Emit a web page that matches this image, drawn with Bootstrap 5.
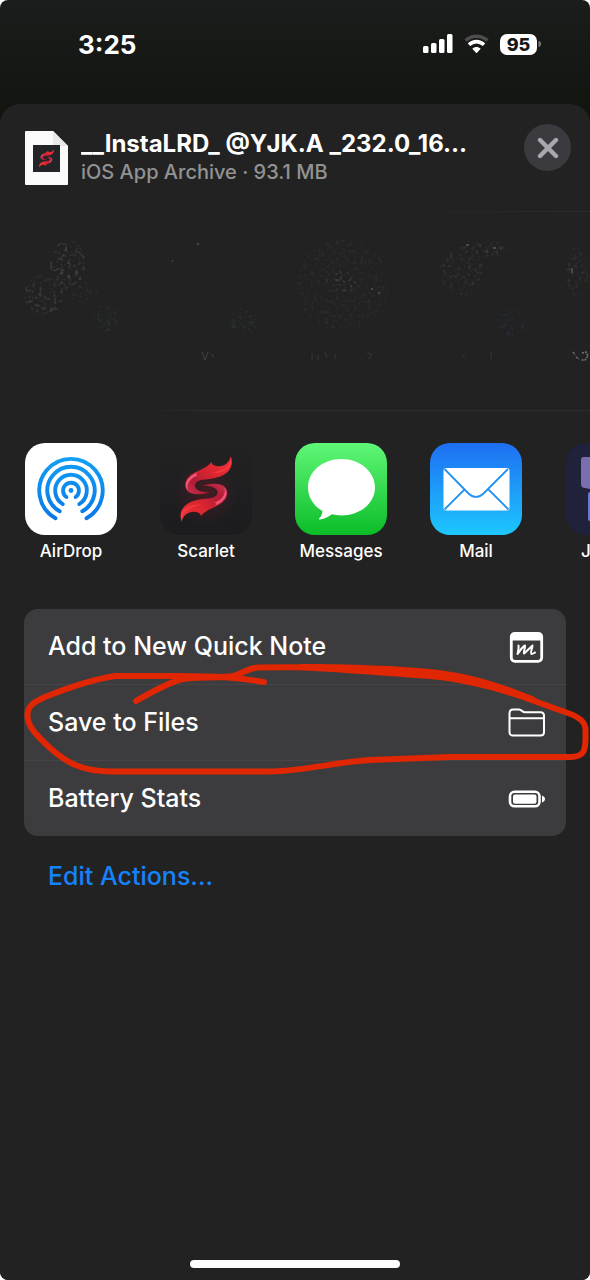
<!DOCTYPE html>
<html lang="en">
<head>
<meta charset="utf-8">
<meta name="viewport" content="width=device-width, initial-scale=1">
<title>Share Sheet</title>
<link href="https://cdn.jsdelivr.net/npm/bootstrap@5.3.0/dist/css/bootstrap.min.css" rel="stylesheet">
<style>
  html { background: #fff; }
  body { font-family: Inter, Roboto, sans-serif; background: #fff; color: #fff; }
  svg { display: block; flex: none; }
  .phone { background: linear-gradient(#1b1d1c 0, #121510 100px); border-radius: 8px; }
  .status-bar { height: 104px; padding: 0 48px 16px 78px; }
  .clock { font-size: 26px; font-weight: 700; }
  .charge { background: #fff; color: #161816; width: 37px; height: 21px; border-radius: 7px; font-size: 18px; line-height: 21px; font-weight: 800; }
  .sheet { background: #222; border-radius: 20px 20px 8px 8px; }
  .sheet-head { height: 107px; padding: 0 19px 0 25px; gap: 13px; }
  .file-title { font-size: 24px; line-height: 28px; font-weight: 700; }
  .file-meta { font-size: 20px; line-height: 28px; font-weight: 500; color: #929293; }
  .close-btn { width: 47px; height: 47px; background: #3b3b3f; border: 0; margin-bottom: 20px; }
  .people { height: 200px; background: linear-gradient(90deg, #222 60%, #2b2b2b) top / 100% 1px no-repeat, linear-gradient(90deg, #222 24%, #2d2d2d 36%) bottom / 100% 1px no-repeat; }
  .apps { padding: 32px 0 0 25px; gap: 43px; }
  .app-link { width: 92px; flex: none; color: #fff; text-decoration: none; font-size: 17px; line-height: 20px; font-weight: 500; text-align: center; white-space: nowrap; }
  .app-link svg { margin-bottom: 6px; }
  .app-cut span { display: block; text-align: left; padding-left: 16px; }
  .actions-area { padding: 48px 24px 0; }
  .actions { background: #3c3c3e; border-radius: 14px; }
  .action { height: 75px; padding: 0 21px 0 24px; background: none; color: #fff; border: 0; font-size: 25px; font-weight: 500; text-align: left; }
  .action + .action { height: 76px; border-top: 1px solid #454547; }
  .edit-link { font-size: 25px; line-height: 32px; font-weight: 500; color: #1583fb; text-decoration: none; margin: 24px 24px 0; }
  .marker { left: 0; top: 0; width: 100%; pointer-events: none; }
  .home-bar { width: 210px; height: 8px; background: #fff; border-radius: 4px; margin-bottom: 12px; }
</style>
</head>
<body>
<div class="phone min-vh-100 d-flex flex-column overflow-hidden">

  <header class="status-bar d-flex align-items-center justify-content-between">
    <time class="clock">3:25</time>
    <div class="d-flex align-items-center">
      <svg width="30" height="20" viewBox="0 0 30 20" fill="#fff" aria-label="Signal"><rect x="0" y="12" width="5.500" height="7" rx="1.500"/><rect x="8" y="9" width="5.500" height="10" rx="1.500"/><rect x="16" y="5" width="5.500" height="14" rx="1.500"/><rect x="24" y="0" width="5.500" height="19" rx="1.500"/></svg>
      <svg class="ms-2 me-2" width="31" height="20" viewBox="0 0 31 20" fill="none" aria-label="Wi-Fi"><path d="M4.500 6.500C10.500 .8 20.500 .8 26.500 6.500" stroke="#4b4c4b" stroke-width="3.400"/><path d="M8 10.800C12.500 6.600 18.500 6.600 23 10.800" stroke="#fff" stroke-width="3.600"/><path d="M11.300 14.800c2.500-2.400 5.900-2.400 8.400 0l-4.200 4.400z" fill="#fff"/></svg>
      <span class="charge text-center">95</span>
      <svg width="5" height="10" viewBox="0 0 5 10"><path d="M1.500 1.800c3.500 1 3.500 5.400 0 6.400z" fill="#777"/></svg>
    </div>
  </header>

  <main class="sheet flex-grow-1 d-flex flex-column">
    <section class="sheet-head d-flex align-items-center">
      <svg width="43" height="56" viewBox="0 0 43 56" aria-hidden="true"><path d="M1 1h27l15 15v38a1 1 0 0 1-1 1H1a1 1 0 0 1-1-1V2a1 1 0 0 1 1-1z" fill="#fafafa"/><path d="M28 1v13a2 2 0 0 0 2 2h13z" fill="#e9e9e9"/><rect x="8" y="15" width="27" height="27" fill="#222427"/><use href="#scarlet-s" transform="translate(8.500 15.500) scale(.28)"/></svg>
      <div class="flex-grow-1 overflow-hidden">
        <div class="file-title text-nowrap">__InstaLRD_ @YJK.A _232.0_16...</div>
        <div class="file-meta">iOS App Archive · 93.1 MB</div>
      </div>
      <button class="close-btn rounded-circle d-flex align-items-center justify-content-center p-0" aria-label="Close"><svg width="22" height="22" viewBox="0 0 22 22"><path d="M3 3l16 16M19 3L3 19" stroke="#a7a7ad" stroke-width="4.400" stroke-linecap="round"/></svg></button>
    </section>

    <section class="people" aria-label="People">
      <svg width="590" height="198" viewBox="0 0 590 198" fill="none">
        <defs>
          <filter id="speck" x="0" y="0" width="590" height="198" filterUnits="userSpaceOnUse">
            <feTurbulence type="fractalNoise" baseFrequency=".28" numOctaves="2" seed="4"/>
            <feColorMatrix values="0 0 0 0 1  0 0 0 0 1  0 0 0 0 1  4 0 0 0 -2.100" result="n"/>
            <feComposite in="SourceGraphic" in2="n" operator="in"/>
          </filter>
        </defs>
        <g filter="url(#speck)">
          <ellipse cx="68" cy="54" rx="18" ry="25" fill="#3f403f"/>
          <ellipse cx="44" cy="84" rx="20" ry="20" fill="#3b3c3b"/>
          <ellipse cx="84" cy="82" rx="14" ry="12" fill="#2b2d2c"/>
          <circle cx="105" cy="108" r="13" fill="#273233"/>
          <circle cx="243" cy="111" r="14" fill="#273333"/>
          <circle cx="343" cy="74" r="46" fill="#2b2c2b"/>
          <ellipse cx="343" cy="70" rx="16" ry="10" fill="#3d3e3d"/>
          <ellipse cx="462" cy="60" rx="22" ry="25" fill="#323332"/>
          <ellipse cx="490" cy="38" rx="18" ry="8" fill="#373837"/>
          <circle cx="512" cy="111" r="14" fill="#262e3b"/>
          <ellipse cx="577" cy="60" rx="11" ry="26" fill="#303130"/>
        </g>
        <path d="M197 33h2M172 50h1M466 34h3M493 37h3M572 57v5M371 78h2M378 82h2" stroke="#4a4b4a" stroke-width="2"/>
        <path d="M202 141l3 8 3-8M211 143l3 3" stroke="#424342"/>
        <path d="M312 149v-6M318 149v-5M325 141l2 6M335 148v-5M367 141l5 3-4 4M461 147l4-4M491 141v7" stroke="#353635"/>
        <path d="M573 141l2 3M576 146l3 2M582 142l4-1 2 4-3 4h-4" stroke="#777" stroke-width="1.500" stroke-dasharray="2 1"/>
      </svg>
    </section>

    <nav class="apps d-flex overflow-hidden" aria-label="Apps">
      <a class="app-link" href="#"><svg width="92" height="92" viewBox="0 0 92 92" fill="none"><defs><linearGradient id="air" x1="0" y1="13" x2="0" y2="78" gradientUnits="userSpaceOnUse"><stop stop-color="#12a0f3"/><stop offset="1" stop-color="#0b76e8"/></linearGradient></defs><rect width="92" height="92" rx="20" fill="#fff"/><g stroke="url(#air)" stroke-width="3.900" stroke-linecap="round"><path d="M30.500 75.200A31.700 31.700 0 1 1 61.500 75.200"/><path d="M34.700 68.300A23.700 23.700 0 1 1 57.300 68.300"/><path d="M37.800 61.100A15.800 15.800 0 1 1 54.200 61.100"/><path d="M41.400 54A7.900 7.900 0 1 1 50.600 54"/></g><circle cx="46" cy="47.500" r="2.400" fill="#0d86ed"/></svg>AirDrop</a>

      <a class="app-link" href="#"><svg width="92" height="92" viewBox="0 0 92 92"><defs>
        <linearGradient id="red" x1="1" y1="0" x2="0" y2="1"><stop stop-color="#f5323a"/><stop offset=".45" stop-color="#d9252f"/><stop offset=".75" stop-color="#b01c36"/><stop offset="1" stop-color="#cf3450"/></linearGradient>
        <linearGradient id="ink" x1="0" y1="0" x2="0" y2="1"><stop stop-color="#222223"/><stop offset="1" stop-color="#1c1c1f"/></linearGradient>
        <radialGradient id="glow"><stop stop-color="#7a1626" stop-opacity=".4"/><stop offset="1" stop-color="#7a1626" stop-opacity="0"/></radialGradient>
        <g id="scarlet-half"><path d="M70.700 13C69.500 20 63 24.500 56 23C53 22.300 51.500 21 51.500 19C47 25 38 27.500 32 31C25 35 23 43.500 28 48.500C32 52 42 52 49.500 49.300C42 49.300 35.500 47.500 35 43.500C34.500 39 39 36.800 45 36.500C62 35.500 76 28.500 70.700 13z" fill="url(#red)"/><path d="M38 29C28 33 22.500 41 28 47.500C26 41 30 35.500 38 32C35 32 36 30.500 38 29z" fill="#ef5577"/><path d="M71 15C70 24 62 28 51 30C61 31 70 27 71.500 20z" fill="#ff4248" opacity=".6"/></g>
        <g id="scarlet-s"><use href="#scarlet-half"/><use href="#scarlet-half" transform="rotate(180 46.200 46)"/></g></defs>
        <rect width="92" height="92" rx="20" fill="url(#ink)"/><ellipse cx="46" cy="50" rx="32" ry="32" fill="url(#glow)"/><use href="#scarlet-s"/></svg>Scarlet</a>

      <a class="app-link" href="#"><svg width="92" height="92" viewBox="0 0 92 92"><defs><linearGradient id="msg" x1="0" y1="0" x2="0" y2="1"><stop stop-color="#60f777"/><stop offset="1" stop-color="#0bbc28"/></linearGradient></defs><rect width="92" height="92" rx="20" fill="url(#msg)"/><path d="M46.500 16C27.500 16 13 28.500 13 44.500c0 10 5.700 18.500 14.500 23.500-.3 3.500-1.500 5.500-3.200 7.300-.6.800-.1 1.400.8 1.200 4.800-.8 8.700-2.800 11.600-5.200 3 .7 6.300 1.100 9.800 1.100C65.500 72.400 80 60 80 44.500S65.500 16 46.500 16z" fill="#fff"/></svg>Messages</a>

      <a class="app-link" href="#"><svg width="92" height="92" viewBox="0 0 92 92"><defs><linearGradient id="sky" x1="0" y1="0" x2="0" y2="1"><stop stop-color="#1e6ff2"/><stop offset="1" stop-color="#1dc7fe"/></linearGradient></defs><rect width="92" height="92" rx="20" fill="url(#sky)"/><rect x="13.500" y="25" width="66" height="42.500" rx="2.500" fill="#fff"/><path d="M14.500 26l24 24.500c4.500 4.500 10.500 4.500 15 0l24.500-24.500M14.500 66.500l20-20M78.500 66.500l-20-20" fill="none" stroke="#2593f3" stroke-width="1.800"/></svg>Mail</a>

      <a class="app-link app-cut" href="#"><svg width="92" height="92" viewBox="0 0 92 92"><rect x="1" width="91" height="92" rx="20" fill="#20213b"/><path d="M18 14h40v38l-38-7a4 4 0 0 1-4-4V17a3 3 0 0 1 2-3z" fill="#7a6eae"/><rect x="23" y="49" width="30" height="29" rx="2" fill="#6878d8"/></svg><span>J</span></a>
    </nav>

    <section class="actions-area position-relative d-flex flex-column">
      <div class="actions d-flex flex-column">
        <button class="action d-flex align-items-center justify-content-between">Add to New Quick Note
          <svg width="37" height="34" viewBox="0 0 37 34" fill="none" stroke="#fff"><rect x="3.300" y="3.300" width="30.400" height="28" rx="3.500" stroke-width="2.800"/><path d="M3 4h31v6.500H3z" fill="#fff" stroke="none"/><path d="M10.500 15.500c.5 2.500-.5 5.500-1 8.500 2.500-3 4.500-7 7.500-8.500.3 3-1.700 5.500-1 8 2.500-2 5.500-5.500 8.500-8 0 3-2.500 6.500-1.200 8.300.8.800 2.700-.8 3.700-1.300" stroke-width="2" stroke-linecap="round" stroke-linejoin="round"/></svg></button>
        <button class="action d-flex align-items-center justify-content-between">Save to Files
          <svg width="37" height="34" viewBox="0 0 37 34" fill="none" stroke="#fff" stroke-width="2" stroke-linejoin="round"><path d="M1.500 26V7.500c0-2.300 1.200-4 3.500-4h6c2.600 0 3.300 2.800 6 2.800h15.500c2.300 0 3.500 1.200 3.500 3.500V26c0 2.300-1.200 3.500-3.500 3.500H5c-2.300 0-3.500-1.200-3.500-3.500zM1.500 12.300H36"/></svg></button>
        <button class="action d-flex align-items-center justify-content-between">Battery Stats
          <svg width="37" height="34" viewBox="0 0 37 34" fill="#fff"><rect x="2" y="9.800" width="29.500" height="14.500" rx="4.500" fill="none" stroke="#fff" stroke-width="2.600"/><rect x="5" y="12.500" width="23.500" height="9.200" rx="2"/><path d="M34 13.500c4 1.500 4 5.500 0 7z"/></svg></button>
      </div>
      <a class="edit-link align-self-start" href="#">Edit Actions...</a>
      <svg class="marker position-absolute" viewBox="0 561 590 240" fill="none" stroke="#e02602" stroke-linecap="round" stroke-linejoin="round" aria-hidden="true">
        <path d="M136 701C155 690 170 682 183 679C195 677 222 678 233 676C242 674 247 668 258 667.500C300 666.500 350 667 430 673C480 678 530 700 565 712C580 717 585.500 722 585.500 730V738C585.500 750 584 756.500 572 757H450L370 760C335 762 305 771 270 771.500H110C80 771 66 762 50 748C36 735 27.500 726 27.500 716C27 706 34 702 45 697C70 687 95 679 115 676H178C220 676 240 678 264 682" stroke-width="6"/>
        <path d="M300 664C350 664 400 666 430 669C470 673 500 683 535 697L532 703C500 692 470 683 430 679C390 676 350 673 300 670z" fill="#e02602" stroke="none"/>
      </svg>
    </section>

    <div class="home-bar mt-auto mx-auto"></div>
  </main>
</div>
<script src="https://cdn.jsdelivr.net/npm/bootstrap@5.3.0/dist/js/bootstrap.bundle.min.js"></script>
</body>
</html>
